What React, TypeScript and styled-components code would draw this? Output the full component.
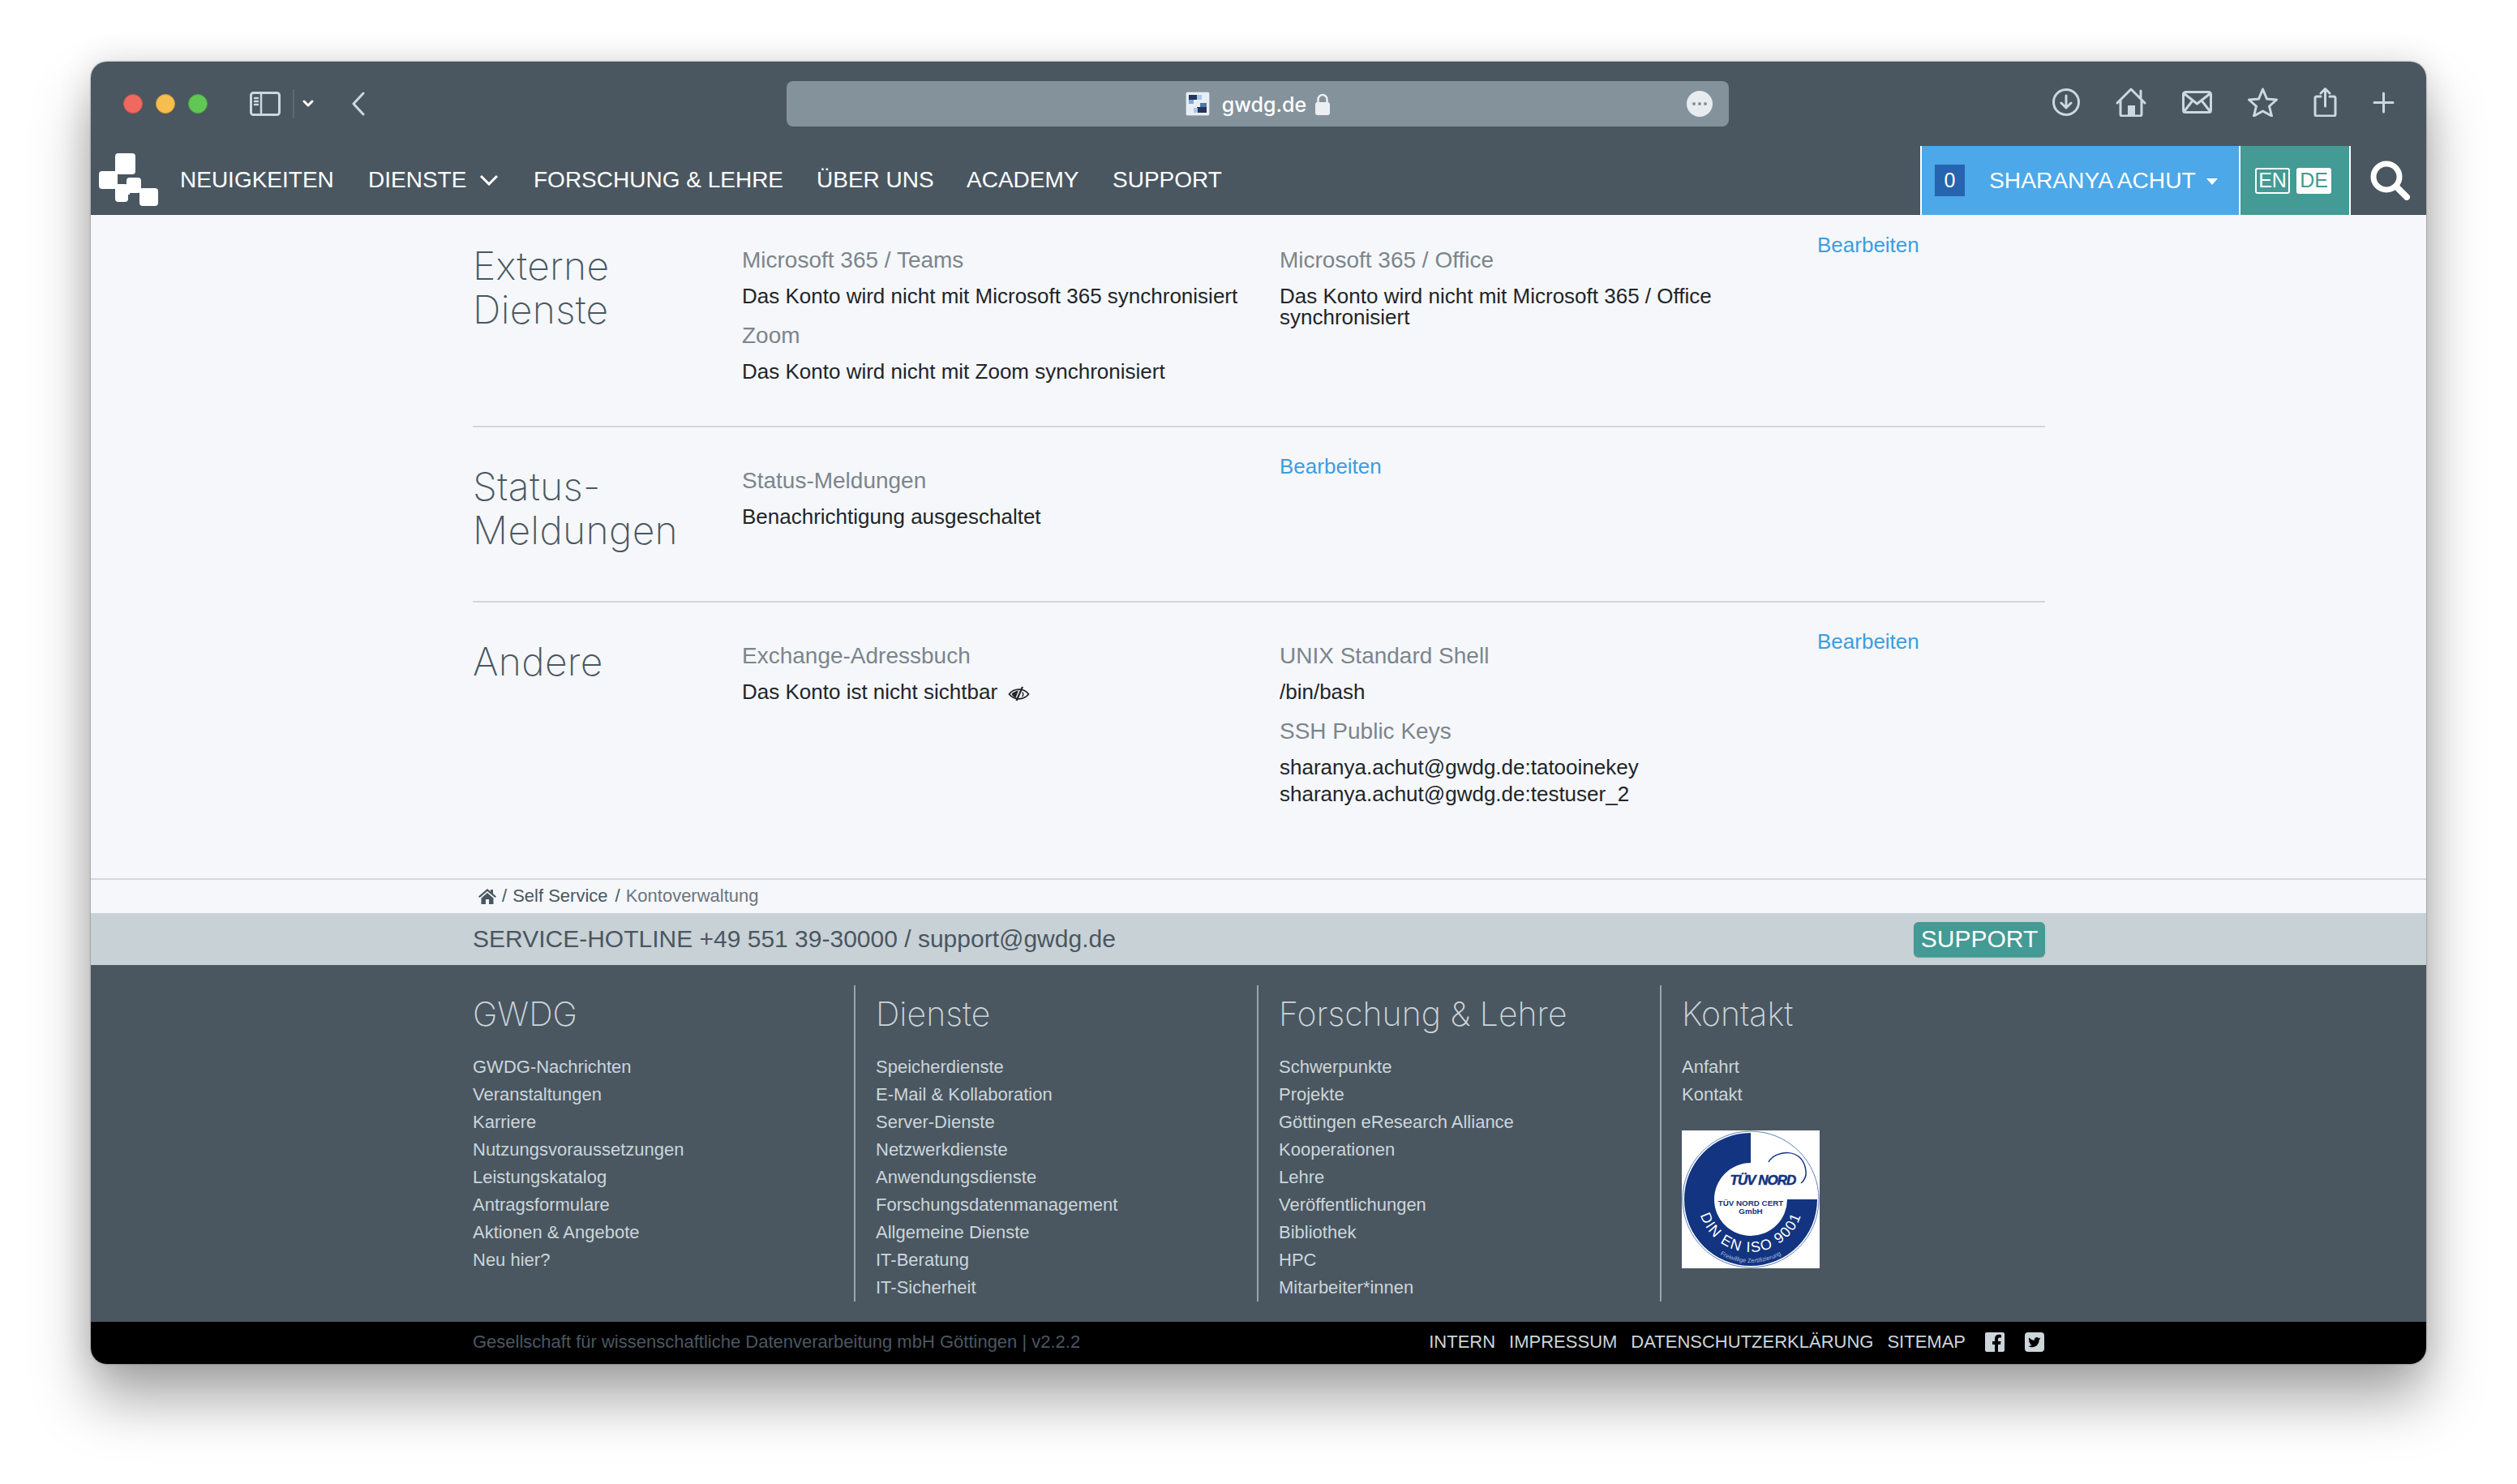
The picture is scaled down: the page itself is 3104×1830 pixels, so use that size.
import React from 'react';
import styled, { createGlobalStyle } from 'styled-components';

const Global = createGlobalStyle`
  html, body { margin: 0; padding: 0; background: #fff; }
  body { font-family: "Liberation Sans", Arial, sans-serif; }
  * { box-sizing: border-box; }
`;

const Stage = styled.div`
  width: 3104px; height: 1830px; padding: 76px 112px 148px; background: #fff; overflow: hidden;
`;
const Win = styled.div`
  width: 2880px; height: 1606px; display: flex; flex-direction: column; border-radius: 20px; overflow: hidden;
  background: #f5f7fa;
  box-shadow: 0 0 2px rgba(0,0,0,.5), 0 44px 70px rgba(0,0,0,.34), 0 0 40px rgba(0,0,0,.12);
`;
const TitleBar = styled.div`
  height: 104px; background: #4a5761; display: flex; align-items: center; position: relative; flex: none;
`;
const Light = styled.span<{ $c: string; $b: string }>`
  width: 24px; height: 24px; border-radius: 50%; background: ${p => p.$c}; border: 1px solid ${p => p.$b}; margin-right: 16px;
`;
const Lights = styled.div`display: flex; margin-left: 40px; width: 156px;`;
const Sep = styled.span`width: 2px; height: 36px; background: #5c6a74; margin: 0 10px 0 15px;`;
const ToolSvg = styled.svg<{ $ml?: number }>`
  display: block; flex: none; fill: none; stroke: #ccd8e0; stroke-width: 3; stroke-linecap: round; stroke-linejoin: round;
  margin-left: ${p => p.$ml ?? 0}px;
`;
const Url = styled.div`
  position: absolute; left: 858px; top: 24px; width: 1162px; height: 56px; border-radius: 8px; background: #84929c;
  display: flex; align-items: center; justify-content: center; color: #fff; font: 500 25px Inter, "Liberation Sans", sans-serif;
`;
const UrlText = styled.span`margin: 2px 11px 0 15px;`;
const More = styled.div`
  position: absolute; right: 20px; top: 12px; width: 32px; height: 32px; border-radius: 50%; background: #e8ecef;
  display: flex; align-items: center; justify-content: center; gap: 3px;
`;
const Dot = styled.i`width: 4px; height: 4px; background: #84929c; border-radius: 50%;`;
const ToolRight = styled.div`position: absolute; right: 39px; top: 0; height: 104px; padding-bottom: 4px; display: flex; align-items: center; gap: 44px;`;

const Nav = styled.div`
  height: 85px; background: #4a5761; display: flex; align-items: stretch; flex: none; position: relative;
  border-bottom: 1px solid #3e4850;
`;
const Logo = styled.svg`position: absolute; left: 10px; top: 9px; fill: #fff;`;
const NavList = styled.div`display: flex; align-items: center; padding-left: 110px; flex: 1;`;
const NavItem = styled.a<{ $w: number }>`
  color: #fff; font-size: 28px; width: ${p => p.$w}px; display: flex; align-items: center; gap: 16px; white-space: nowrap;
`;
const UserBox = styled.div`
  width: 393px; background: #4ca8e8; border-left: 2px solid #fff; display: flex; align-items: center; padding-left: 16px; color: #fff; font-size: 28.2px; height: 85px;
`;
const Count = styled.span`
  width: 37px; height: 39px; background: #2764b0; font-size: 25px; display: flex; align-items: center; justify-content: center; margin-right: 30px;
`;
const Caret = styled.span`
  width: 0; height: 0; border-left: 7px solid transparent; border-right: 7px solid transparent; border-top: 8px solid #fff; margin-left: 13px; margin-top: 2px;
`;
const LangBox = styled.div`
  width: 138px; height: 85px; background: #449a94; border-left: 2px solid #fff; border-right: 2px solid #fff; display: flex; align-items: center; padding-left: 18px; gap: 8px;
`;
const Lang = styled.span<{ $on?: boolean }>`
  width: 43px; height: 32px; border: 2px solid #fff; border-radius: 3px; font-size: 25px; display: flex; align-items: center; justify-content: center;
  color: ${p => (p.$on ? '#449a94' : '#fff')}; background: ${p => (p.$on ? '#fff' : 'transparent')};
`;
const SearchWrap = styled.div`width: 93px; display: flex; align-items: center; justify-content: center; padding-left: 2px;`;

const Main = styled.div`flex: 1; min-height: 0; padding: 0 470px 0 471px; display: flex; flex-direction: column; background: #f5f7fa;`;
const Section = styled.section<{ $h: number; $line?: boolean; $top?: number }>`
  height: ${p => p.$h}px; display: grid; grid-template-columns: 332px 663px 663px 1fr; flex: none;
  padding-top: ${p => p.$top ?? 0}px;
  border-bottom: ${p => (p.$line ? '2px solid #d2d6da' : '0')};
`;
const SecTitle = styled.h2`
  margin: 0; padding-top: 36px; font-weight: 250; font-family: Inter, "Liberation Sans", sans-serif; font-size: 48px; line-height: 54px; color: #4a5761; letter-spacing: 0.3px;
`;
const Col = styled.div`padding-top: 38px;`;
const Label = styled.div<{ $gap?: number }>`
  color: #7d858c; font-size: 28px; line-height: 36px; margin-top: ${p => p.$gap ?? 0}px;
`;
const Val = styled.div`
  color: #212529; font-size: 26px; line-height: 33.5px; padding-top: 10px;
`;
const ValTight = styled(Val)`line-height: 26px; padding-top: 13px;`;
const Edit = styled.a<{ $pt?: number }>`color: #3d9de0; font-size: 26px; line-height: 34px; display: block; padding-top: ${p => p.$pt ?? 21}px;`;
const EyeIcon = styled.svg`margin-left: 13px; vertical-align: -3px;`;

const Crumbs = styled.div`
  height: 43px; background: #f5f7fa; border-top: 2px solid #d5d9dd; padding: 0 0 1px 478px; display: flex; align-items: center; color: #4a5761; font-size: 22px; gap: 7px; flex: none;
`;
const CrumbLastSlash = styled.span`margin-left: 2px;`;
const CrumbLast = styled.span`color: #6c757d;`;
const Hotline = styled.div`
  height: 64px; background: #c8d1d6; padding: 0 470px 0 471px; display: flex; align-items: center; justify-content: space-between; color: #4a5761; font-size: 30px; flex: none;
`;
const SupportBtn = styled.a`
  width: 162px; height: 43px; background: #449a94; color: #fff; border-radius: 6px; font-size: 30px; display: flex; align-items: center; justify-content: center;
  box-shadow: 0 1px 1px #8a8f93;
`;
const FooterMain = styled.div`
  height: 440px; background: #4a5761; padding: 25px 471px 0; display: grid; grid-template-columns: repeat(4, 497px); flex: none;
`;
const FCol = styled.div<{ $first?: boolean }>`
  height: 390px; padding-top: 10px; padding-left: ${p => (p.$first ? 0 : 25)}px; border-left: ${p => (p.$first ? 0 : '2px solid #9aa4ab')}; margin-left: ${p => (p.$first ? 0 : -27)}px;
`;
const FTitle = styled.h3`
  margin: 0 0 24px; font-weight: 250; font-family: Inter, "Liberation Sans", sans-serif; font-size: 41px; line-height: 50px; color: #ccd5da;
`;
const FLink = styled.a`display: block; color: #ccd5da; font-size: 22px; line-height: 34px;`;
const Badge = styled.svg`display: block; margin-top: 27px;`;
const Bottom = styled.div`
  height: 52px; background: #000; flex: none; padding: 0 471px 2px; display: flex; align-items: center; justify-content: space-between;
`;
const Copy = styled.span`color: #4a5761; font-size: 22px;`;
const BottomLinks = styled.div`display: flex; align-items: center; color: #ccd5da; font-size: 22px; gap: 17px;`;
const Social = styled.svg<{ $ml: number }>`fill: #ccd5da; display: block; margin-left: ${p => p.$ml}px;`;

const gwdg = ['GWDG-Nachrichten','Veranstaltungen','Karriere','Nutzungsvoraussetzungen','Leistungskatalog','Antragsformulare','Aktionen & Angebote','Neu hier?'];
const dienste = ['Speicherdienste','E-Mail & Kollaboration','Server-Dienste','Netzwerkdienste','Anwendungsdienste','Forschungsdatenmanagement','Allgemeine Dienste','IT-Beratung','IT-Sicherheit'];
const forschung = ['Schwerpunkte','Projekte','Göttingen eResearch Alliance','Kooperationen','Lehre','Veröffentlichungen','Bibliothek','HPC','Mitarbeiter*innen'];

const TuvBadge = () => (
  <Badge width="170" height="170" viewBox="0 0 170 170">
    <rect width="170" height="170" fill="#fff" />
    <circle cx="85" cy="85" r="84" fill="none" stroke="#5f7fb8" strokeWidth="1" />
    <path d="M85 3 A82 82 0 1 0 167 85 L130 85 A45 45 0 0 1 40 85 A45 45 0 0 1 85 40 Z" fill="#123481" />
    <path d="M107 39 C115 24 150 20 153 50 C154 56 151 62 147 65" fill="none" stroke="#123481" strokeWidth="1.5" />
    <text x="100" y="67" textAnchor="middle" fontSize="17" fontWeight="700" fontStyle="italic" letterSpacing="-1" stroke="#123481" strokeWidth="0.5" fill="#123481" fontFamily="Liberation Sans">TÜV NORD</text>
    <text x="85" y="93" textAnchor="middle" fontSize="9.800" fontWeight="700" fill="#123481" fontFamily="Liberation Sans">TÜV NORD CERT</text>
    <text x="85" y="103" textAnchor="middle" fontSize="9.800" fontWeight="700" fill="#123481" fontFamily="Liberation Sans">GmbH</text>
    <path id="tuvArc" d="M20 85 A65 65 0 0 0 150 85" fill="none" />
    <text fontSize="18" fill="#fff" fontFamily="Liberation Sans" letterSpacing="1.500"><textPath href="#tuvArc" startOffset="50%" textAnchor="middle">DIN EN ISO 9001</textPath></text>
    <path id="tuvArc2" d="M7 85 A78 78 0 0 0 163 85" fill="none" />
    <text fontSize="7.500" fill="#a9bbdc" fontFamily="Liberation Sans"><textPath href="#tuvArc2" startOffset="50%" textAnchor="middle">Freiwillige Zertifizierung</textPath></text>
  </Badge>
);

const LogoMark = () => (
  <Logo width="73" height="66" viewBox="0 0 73 66">
    <rect x="20" y="0" width="25" height="26" rx="4" />
    <rect x="0" y="22" width="23" height="22" rx="4" />
    <rect x="20" y="38" width="16" height="22" rx="4" />
    <rect x="34" y="30" width="18" height="19" rx="4" />
    <rect x="26" y="43" width="12" height="8" />
    <rect x="50" y="43" width="23" height="22" rx="4" />
  </Logo>
);

export default function App() {
  return (
    <>
      <Global />
      <Stage>
        <Win>
          <TitleBar>
            <Lights>
              <Light $c="#f0695f" $b="#d3534a" />
              <Light $c="#f6bd4f" $b="#d59e34" />
              <Light $c="#62c655" $b="#4aa73e" />
            </Lights>
            <ToolSvg width="38" height="30" viewBox="0 0 38 30">
              <rect x="1.5" y="1.5" width="35" height="27" rx="3" />
              <path d="M14 2v26M6 8h4M6 12h4M6 16h4" strokeWidth="2.500" />
            </ToolSvg>
            <Sep />
            <ToolSvg width="14" height="10" viewBox="0 0 14 10" style={{ stroke: '#fff' }}>
              <path d="M2 2l5 5 5-5" />
            </ToolSvg>
            <ToolSvg width="16" height="30" viewBox="0 0 16 30" $ml={47}>
              <path d="M14 2L2 15l12 13" />
            </ToolSvg>
            <Url>
              <svg width="30" height="30" viewBox="0 0 30 30">
                <rect width="30" height="30" rx="2" fill="#e8eef4" stroke="#6c7680" />
                <rect x="4" y="4" width="10" height="6" fill="#25345c" /><rect x="14" y="4" width="6" height="6" fill="#a8c8ec" />
                <rect x="4" y="10" width="6" height="5" fill="#7ea8d8" /><rect x="18" y="14" width="8" height="6" fill="#5078a8" />
                <rect x="14" y="19" width="12" height="7" fill="#25345c" /><rect x="10" y="20" width="5" height="6" fill="#a8c8ec" />
              </svg>
              <UrlText>gwdg.de</UrlText>
              <svg width="18" height="27" viewBox="0 0 18 27">
                <path d="M3.500 12V7.500a5.500 5.500 0 0 1 11 0V12" fill="none" stroke="#eceff1" strokeWidth="2.500" />
                <rect x="0" y="11" width="18" height="16" rx="3" fill="#eceff1" />
              </svg>
              <More><Dot /><Dot /><Dot /></More>
            </Url>
            <ToolRight>
              <ToolSvg width="34" height="34" viewBox="0 0 34 34">
                <circle cx="17" cy="17" r="15.500" /><path d="M17 9v15M11 18l6 6 6-6" />
              </ToolSvg>
              <ToolSvg width="38" height="36" viewBox="0 0 38 36">
                <path d="M2 19L19 2l17 17M6 15v18a2 2 0 0 0 2 2h22a2 2 0 0 0 2-2V15M31 4v9" />
                <rect x="15" y="22" width="9" height="13" fill="#ccd8e0" stroke="none" />
              </ToolSvg>
              <ToolSvg width="37" height="28" viewBox="0 0 37 28">
                <rect x="1.500" y="1.500" width="34" height="25" rx="3" /><path d="M2 3l16.500 13L35 3M2 26l11-14M35 26L24 12" />
              </ToolSvg>
              <ToolSvg width="37" height="36" viewBox="0 0 37 36">
                <path d="M18.500 2l5 12 12 1-9 8 3 12-11-6-11 6 3-12-9-8 12-1z" />
              </ToolSvg>
              <ToolSvg width="29" height="36" viewBox="0 0 29 36">
                <path d="M9 11H4a2 2 0 0 0-2 2v20a2 2 0 0 0 2 2h21a2 2 0 0 0 2-2V13a2 2 0 0 0-2-2h-5M14.500 23V2M9 7l5.500-5.500L20 7" />
              </ToolSvg>
              <ToolSvg width="27" height="27" viewBox="0 0 27 27">
                <path d="M13.500 2v23M2 13.500h23" />
              </ToolSvg>
            </ToolRight>
          </TitleBar>
          <Nav>
            <LogoMark />
            <NavList>
              <NavItem $w={232}>NEUIGKEITEN</NavItem>
              <NavItem $w={204}>
                DIENSTE
                <svg width="24" height="14" viewBox="0 0 24 14" fill="none" stroke="#fff" strokeWidth="3"><path d="M2 2l10 10L22 2" /></svg>
              </NavItem>
              <NavItem $w={349}>FORSCHUNG &amp; LEHRE</NavItem>
              <NavItem $w={185}>ÜBER UNS</NavItem>
              <NavItem $w={180}>ACADEMY</NavItem>
              <NavItem $w={160}>SUPPORT</NavItem>
            </NavList>
            <UserBox>
              <Count>0</Count>
              SHARANYA ACHUT
              <Caret />
            </UserBox>
            <LangBox>
              <Lang>EN</Lang>
              <Lang $on>DE</Lang>
            </LangBox>
            <SearchWrap>
              <svg width="50" height="50" viewBox="0 0 50 50" fill="none" stroke="#fff">
                <circle cx="21" cy="21" r="16" strokeWidth="7" />
                <path d="M33 33l13 13" strokeWidth="8" strokeLinecap="round" />
              </svg>
            </SearchWrap>
          </Nav>
          <Main>
            <Section $h={262} $line>
              <SecTitle>Externe<br />Dienste</SecTitle>
              <Col>
                <Label>Microsoft 365 / Teams</Label>
                <Val>Das Konto wird nicht mit Microsoft 365 synchronisiert</Val>
                <Label $gap={13}>Zoom</Label>
                <Val>Das Konto wird nicht mit Zoom synchronisiert</Val>
              </Col>
              <Col>
                <Label>Microsoft 365 / Office</Label>
                <ValTight>Das Konto wird nicht mit Microsoft 365 / Office synchronisiert</ValTight>
              </Col>
              <Edit $pt={20}>Bearbeiten</Edit>
            </Section>
            <Section $h={216} $line $top={10}>
              <SecTitle>Status-<br />Meldungen</SecTitle>
              <Col>
                <Label>Status-Meldungen</Label>
                <Val>Benachrichtigung ausgeschaltet</Val>
              </Col>
              <Edit>Bearbeiten</Edit>
            </Section>
            <Section $h={340} $top={10}>
              <SecTitle>Andere</SecTitle>
              <Col>
                <Label>Exchange-Adressbuch</Label>
                <Val>
                  Das Konto ist nicht sichtbar
                  <EyeIcon width="27" height="19" viewBox="0 0 27 19" fill="none" stroke="#212529" strokeWidth="1.800">
                    <path d="M1.500 10c3-3.800 7-5.800 12-5.800s9 2 12 5.800c-3 3.800-7 5.800-12 5.800s-9-2-12-5.800z" />
                    <path d="M4.500 10c1.500-2 4-3.500 8.500-4.500l-3.500 9c-2-.8-3.800-2.500-5-4.500z" fill="#212529" stroke="none" />
                    <path d="M18 1l-7.500 17" strokeWidth="2.200" />
                    <path d="M17.500 7.500c1.800 1.500 1.800 3.500 0 5.500" strokeWidth="1.500" />
                  </EyeIcon>
                </Val>
              </Col>
              <Col>
                <Label>UNIX Standard Shell</Label>
                <Val>/bin/bash</Val>
                <Label $gap={13}>SSH Public Keys</Label>
                <Val>sharanya.achut@gwdg.de:tatooinekey<br />sharanya.achut@gwdg.de:testuser_2</Val>
              </Col>
              <Edit>Bearbeiten</Edit>
            </Section>
          </Main>
          <Crumbs>
            <svg width="22" height="20" viewBox="0 0 22 20" fill="#4a5761">
              <path d="M11 1L0 10.500l1.500 1.500L11 4l9.500 8L22 10.500 18 7V2h-3v2.500zM3.500 12.500V20H9v-6h4v6h5.500v-7.500L11 6z" />
            </svg>
            <span>/</span><span>Self Service</span><CrumbLastSlash>/</CrumbLastSlash><CrumbLast>Kontoverwaltung</CrumbLast>
          </Crumbs>
          <Hotline>
            <span>SERVICE-HOTLINE +49 551 39-30000 / support@gwdg.de</span>
            <SupportBtn>SUPPORT</SupportBtn>
          </Hotline>
          <FooterMain>
            <FCol $first>
              <FTitle>GWDG</FTitle>
              {gwdg.map(t => <FLink key={t}>{t}</FLink>)}
            </FCol>
            <FCol>
              <FTitle>Dienste</FTitle>
              {dienste.map(t => <FLink key={t}>{t}</FLink>)}
            </FCol>
            <FCol>
              <FTitle>Forschung &amp; Lehre</FTitle>
              {forschung.map(t => <FLink key={t}>{t}</FLink>)}
            </FCol>
            <FCol>
              <FTitle>Kontakt</FTitle>
              <FLink>Anfahrt</FLink>
              <FLink>Kontakt</FLink>
              <TuvBadge />
            </FCol>
          </FooterMain>
          <Bottom>
            <Copy>Gesellschaft für wissenschaftliche Datenverarbeitung mbH Göttingen | v2.2.2</Copy>
            <BottomLinks>
              <span>INTERN</span><span>IMPRESSUM</span><span>DATENSCHUTZERKLÄRUNG</span><span>SITEMAP</span>
              <Social $ml={7} width="24" height="24" viewBox="0 0 24 24">
                <path d="M2 0h20a2 2 0 0 1 2 2v20a2 2 0 0 1-2 2h-6v-9h3l.5-4H16V8.500c0-1.200.4-2 2-2h2V3c-.5 0-1.500-.2-3-.2-3 0-5 1.800-5 5V11H9v4h3v9H2a2 2 0 0 1-2-2V2a2 2 0 0 1 2-2z" />
              </Social>
              <Social $ml={8} width="24" height="24" viewBox="0 0 24 24">
                <path fillRule="evenodd" d="M4 0h16a4 4 0 0 1 4 4v16a4 4 0 0 1-4 4H4a4 4 0 0 1-4-4V4a4 4 0 0 1 4-4zm15.500 7.600c-.6.300-1.200.4-1.800.5.600-.4 1.100-1 1.300-1.700-.6.300-1.300.6-2 .7a3.100 3.100 0 0 0-5.300 2.800c-2.600-.1-4.900-1.400-6.400-3.300-.8 1.400-.4 3.200 1 4.100-.5 0-1-.1-1.400-.4 0 1.500 1.100 2.800 2.500 3.100-.5.100-.9.100-1.400.1.400 1.200 1.500 2.100 2.900 2.100a6.200 6.200 0 0 1-4.600 1.300c4 2.600 9.400 1.500 11.800-2.400 1.100-1.700 1.600-3.600 1.500-5.100.6-.4 1.100-1 1.900-1.800z" />
              </Social>
            </BottomLinks>
          </Bottom>
        </Win>
      </Stage>
    </>
  );
}
